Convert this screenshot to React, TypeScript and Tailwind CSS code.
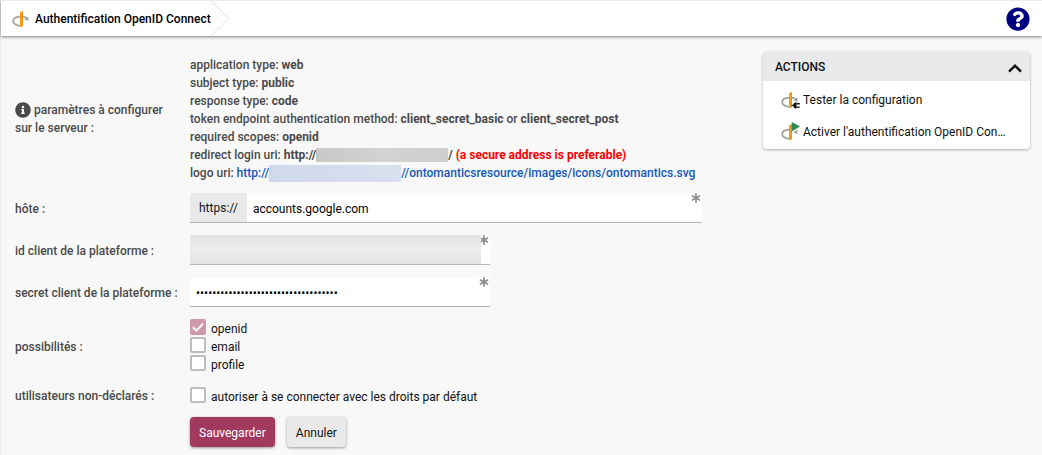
import React from "react";
import { FaInfoCircle, FaQuestionCircle } from "react-icons/fa";

function OpenIdIcon({ badge }: { badge?: "plug" | "play" }) {
  return (
    <svg viewBox="0 0 20 20" className="w-5 h-5 shrink-0" aria-hidden="true">
      <path
        d="M9 7.6C4.8 7.9 2.2 9.7 2.2 12c0 2.4 2.7 4.3 7 4.8"
        fill="none"
        stroke="#a3a3a3"
        strokeWidth="1.8"
      />
      {badge !== "play" && (
        <path d="M11.6 7.6c1.7.1 3 .6 4 1.3" fill="none" stroke="#a3a3a3" strokeWidth="1.8" />
      )}
      <path d="M17.2 7.6l.5 4.2-4.5-1.2z" fill="#a3a3a3" />
      <path d="M9 3.2l2.7-1.1v15.2L9 18.3z" fill="#ff9a0a" />
      <path d="M11 2.4l.7-.3v15.2l-.7.3z" fill="#e08600" />
      {badge === "plug" && (
        <g fill="#111">
          <path d="M11.6 14.8h1.6c.4-1.7 1.5-2.6 3.4-2.6v6.4c-1.9 0-3-.9-3.4-2.6h-1.6z" />
          <path d="M16.6 13.1h3.2v1.3h-3.2zM16.6 16.4h3.2v1.3h-3.2z" />
        </g>
      )}
      {badge === "play" && <path d="M11.8 0L20 4.6l-8.2 4.8z" fill="#2e8b57" />}
    </svg>
  );
}

function Required() {
  return (
    <svg viewBox="0 0 10 10" className="absolute top-0 right-px w-[10px] h-[10px]" aria-hidden="true">
      <path d="M5 .3v9.4M.9 2.7l8.2 4.6M.9 7.3l8.2-4.6" stroke="#8c8c8c" strokeWidth="1.7" />
    </svg>
  );
}

function Checkbox({ id, label, checked, disabled }: { id: string; label: string; checked?: boolean; disabled?: boolean }) {
  return (
    <div className="flex items-start gap-[5px] h-[18px]">
      <span className="relative flex">
        <input
          id={id}
          type="checkbox"
          defaultChecked={checked}
          disabled={disabled}
          className="peer appearance-none w-4 h-4 rounded-xs border-2 border-[#bdbdbd] bg-white checked:border-[#cf98ac] checked:bg-[#cf98ac]"
        />
        <svg viewBox="0 0 16 16" className="absolute inset-0 w-4 h-4 hidden peer-checked:block pointer-events-none">
          <path d="M3 8.3l3.3 3.3L13 4.8" fill="none" stroke="#fff" strokeWidth="2" />
        </svg>
      </span>
      <label htmlFor={id} className="pt-px leading-[18px]">{label}</label>
    </div>
  );
}

const inputClass =
  "h-[30px] min-w-0 border-b border-[#b5b5b5] bg-white px-1.5 pt-0.5 text-black outline-none";
const infoClass = "font-medium text-[#4a4a4a]";
const labelClass = "pt-0.5 font-medium text-[#4a4a4a]";

export default function App() {
  return (
    <div className="min-h-screen bg-[#f8f8f8] border-l border-[#ebebeb] font-['Roboto',sans-serif] text-xs leading-[18px] text-[#111]">
      {/* Top bar */}
      <header className="flex items-center justify-between h-9 bg-white border-t border-[#ebebeb] shadow-[0_1px_3px_rgba(0,0,0,0.5)] pr-3">
        <div className="flex items-center self-stretch">
          <div className="flex items-center gap-1 pl-[10px]">
            <OpenIdIcon />
            <h1 className="font-medium text-black">Authentification OpenID Connect</h1>
          </div>
          <svg viewBox="0 0 18 35" className="w-[18px] h-[35px]" aria-hidden="true">
            <path d="M0 0l17.5 17.5L0 35" fill="none" stroke="#e0e0e0" />
          </svg>
        </div>
        <button type="button" aria-label="Aide" className="text-[#000080]">
          <FaQuestionCircle className="w-6 h-6" />
        </button>
      </header>

      <div className="flex items-start justify-between">
        <main className="pl-3.5 pt-5 pb-2">
          {/* Server parameters */}
          <section className="grid grid-cols-[175px_auto] items-center">
            <div className={infoClass}>
              <FaInfoCircle className="inline w-4 h-4 mr-[3px] -mt-0.5" />
              paramètres à configurer
              <br />
              sur le serveur :
            </div>
            <div className={infoClass}>
              <p>application type: <b>web</b></p>
              <p>subject type: <b>public</b></p>
              <p>response type: <b>code</b></p>
              <p>token endpoint authentication method: <b>client_secret_basic</b> or <b>client_secret_post</b></p>
              <p>required scopes: <b>openid</b></p>
              <p className="flex items-center">
                <span>redirect login uri: <b>http://</b></span>
                <span className="w-[132px] h-3.5 bg-linear-to-r from-[#c8c8c8] via-[#d3d3d3] to-[#cecece]" />
                <b>/</b>
                <b className="ml-[3px] text-[#f00]">(a secure address is preferable)</b>
              </p>
              <p className="flex items-center">
                <span className="mr-[3px]">logo uri:</span>
                <a href="#logo" className="flex items-center text-[#1559b7]">
                  http://
                  <span className="w-[132px] h-[17px] bg-linear-to-r from-[#d0d8ec] to-[#d9dfee]" />
                  //ontomanticsresource/images/icons/ontomantics.svg
                </a>
              </p>
            </div>
          </section>

          {/* Settings */}
          <form className="grid grid-cols-[175px_auto] gap-y-3 items-center pt-[11px]">
            <label htmlFor="host" className={labelClass}>hôte :</label>
            <div className="relative flex w-[512px]">
              <span className="h-[30px] px-[9px] pt-1.5 rounded-tl-sm bg-[#e9e9e9] border-b border-[#b5b5b5]">https://</span>
              <input id="host" type="text" defaultValue="accounts.google.com" className={`${inputClass} flex-1`} />
              <Required />
            </div>

            <label htmlFor="client-id" className={labelClass}>id client de la plateforme :</label>
            <div className="relative flex w-[300px]">
              <input id="client-id" type="text" className={`${inputClass} flex-1`} />
              <Required />
              <div className="absolute top-0 left-0 right-[9px] h-[29px] bg-linear-to-b from-[#e3e3e3] via-[#ececec] to-[#e3e3e3]" />
            </div>

            <label htmlFor="client-secret" className={labelClass}>secret client de la plateforme :</label>
            <div className="relative flex w-[300px]">
              <input
                id="client-secret"
                type="password"
                defaultValue="abcdefghijklmnopqrstuvwxyz012345678"
                className={`${inputClass} flex-1 rounded-tl-sm`}
              />
              <Required />
            </div>

            <div className={labelClass}>possibilités :</div>
            <div>
              <Checkbox id="scope-openid" label="openid" checked disabled />
              <Checkbox id="scope-email" label="email" />
              <Checkbox id="scope-profile" label="profile" />
            </div>

            <div className={labelClass}>utilisateurs non-déclarés :</div>
            <div className="h-5 pt-0.5">
              <Checkbox id="undeclared" label="autoriser à se connecter avec les droits par défaut" />
            </div>

            <div className="col-start-2 flex gap-3">
              <button type="submit" className="h-[30px] px-[9px] pt-0.5 rounded-sm bg-[#a2395f] text-white shadow-[0_1px_3px_rgba(0,0,0,0.4)]">
                Sauvegarder
              </button>
              <button type="button" className="h-[30px] px-[9px] pt-0.5 rounded-sm bg-[#e9e9e9] shadow-[0_1px_3px_rgba(0,0,0,0.4)]">
                Annuler
              </button>
            </div>
          </form>
        </main>

        {/* Actions */}
        <aside className="w-[267px] mt-4 mr-3 rounded bg-white overflow-hidden shadow-[0_1px_3px_rgba(0,0,0,0.3)]">
          <div className="flex items-center justify-between h-[29px] pl-3 pr-2 bg-[#e9e9e9]">
            <h2 className="font-medium">ACTIONS</h2>
            <button type="button" aria-label="Replier">
              <svg viewBox="0 0 14 9" className="w-3.5 h-[9px] mt-1" aria-hidden="true">
                <path d="M1 7.7l6-6 6 6" fill="none" stroke="#111" strokeWidth="2.4" />
              </svg>
            </button>
          </div>
          <ul className="pt-[3px] pb-px">
            <li>
              <button type="button" className="flex items-center gap-[3px] w-full h-8 pl-[17px] pr-5 text-left">
                <OpenIdIcon badge="plug" />
                <span className="truncate">Tester la configuration</span>
              </button>
            </li>
            <li>
              <button type="button" className="flex items-center gap-[3px] w-full h-8 pl-[17px] pr-5 text-left">
                <OpenIdIcon badge="play" />
                <span className="truncate">Activer l'authentification OpenID Connect</span>
              </button>
            </li>
          </ul>
        </aside>
      </div>
    </div>
  );
}
